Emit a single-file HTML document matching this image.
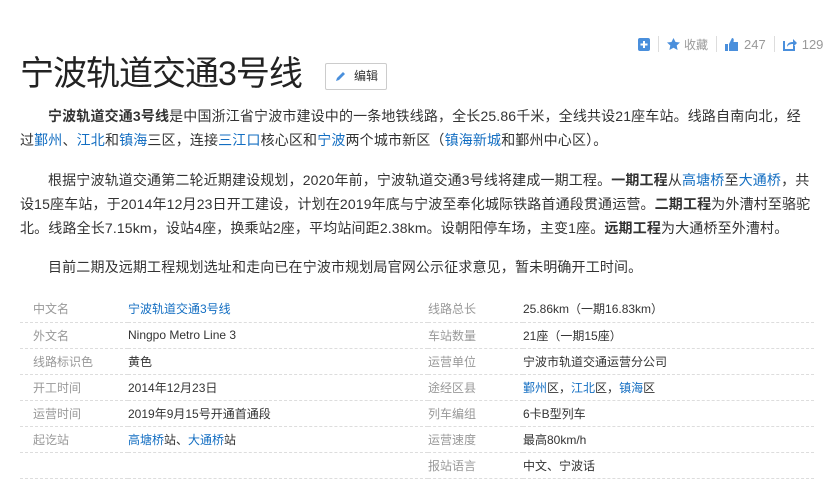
<!DOCTYPE html>
<html><head><meta charset="utf-8"><style>
*{margin:0;padding:0;box-sizing:border-box}
body{width:833px;height:487px;overflow:hidden;background:#fff;font-family:"Liberation Sans","Noto Sans CJK SC",sans-serif;color:#333;position:relative}
a{color:#136ec2;text-decoration:none}
.top{position:absolute;top:35px;left:638px;height:18px;font-size:12px;color:#999;display:flex;align-items:center;white-space:nowrap}
.sep{width:1px;height:16px;background:#ddd;margin:0 8px}
h1{position:absolute;left:20px;top:52px;font-size:34px;font-weight:normal;color:#222;line-height:44px;letter-spacing:-1px}
.edit{position:absolute;left:325px;top:63px;width:62px;height:27px;border:1px solid #ccc;border-radius:2px;font-size:12px;color:#333;line-height:25px;padding-left:28px;background:#fff}
.edit svg{position:absolute;left:9px;top:6px}
p{position:absolute;left:20px;width:813px;font-size:14px;line-height:24px;text-indent:28px;letter-spacing:0.15px;white-space:nowrap}
table{position:absolute;left:20px;top:296px;width:794px;border-collapse:collapse;font-size:12px;table-layout:fixed}
td{height:26px;border-bottom:1px dashed #ddd;vertical-align:middle;padding:0;white-space:nowrap}
td.l{color:#999;padding-left:13px}
td.r{color:#999}
</style></head><body>
<div class="top">
<svg width="12" height="13"><rect width="12" height="13" rx="2" fill="#4a8fdc"/><path d="M6 3v7M2.5 6.5h7" stroke="#fff" stroke-width="2"/></svg>
<span class="sep"></span>
<svg width="13" height="12"><path d="M6.5 0l2 4 4.5.5-3.3 3 .9 4.5-4.1-2.3-4.1 2.3.9-4.5L0 4.5 4.5 4z" fill="#4a8fdc"/></svg><span style="margin-left:4px">收藏</span>
<span class="sep"></span>
<svg width="13" height="13"><path d="M0 6h3v7H0zM4 6l3-6c2 0 2 2 1.5 4H13v9H4z" fill="#4a8fdc"/></svg><span style="margin-left:6px;font-size:13px">247</span>
<span class="sep"></span>
<svg width="14" height="13"><path d="M1 3v9h10V8" stroke="#4a8fdc" stroke-width="2" fill="none"/><path d="M4 9c0-4 3-5 6-5V1l4 4-4 4V6c-3 0-5 1-6 3z" fill="#4a8fdc"/></svg><span style="margin-left:5px;font-size:13px">129</span>
</div>
<h1>宁波轨道交通3号线</h1>
<div class="edit"><svg width="12" height="12"><path d="M1 11l1-3 6-6 2 2-6 6z" fill="#4a8fdc"/></svg>编辑</div>
<p style="top:104px"><b>宁波轨道交通3号线</b>是中国浙江省宁波市建设中的一条地铁线路，全长25.86千米，全线共设21座车站。线路自南向北，经<br>过<a>鄞州</a>、<a>江北</a>和<a>镇海</a>三区，连接<a>三江口</a>核心区和<a>宁波</a>两个城市新区（<a>镇海新城</a>和鄞州中心区）。</p>
<p style="top:168px">根据宁波轨道交通第二轮近期建设规划，2020年前，宁波轨道交通3号线将建成一期工程。<b>一期工程</b>从<a>高塘桥</a>至<a>大通桥</a>，共<br>设15座车站，于2014年12月23日开工建设，计划在2019年底与宁波至奉化城际铁路首通段贯通运营。<b>二期工程</b>为外漕村至骆驼<br>北。线路全长7.15km，设站4座，换乘站2座，平均站间距2.38km。设朝阳停车场，主变1座。<b>远期工程</b>为大通桥至外漕村。</p>
<p style="top:255px">目前二期及远期工程规划选址和走向已在宁波市规划局官网公示征求意见，暂未明确开工时间。</p>
<table>
<colgroup><col style="width:108px"><col style="width:300px"><col style="width:95px"><col></colgroup>
<tr><td class="l">中文名</td><td><a>宁波轨道交通3号线</a></td><td class="r">线路总长</td><td>25.86km（一期16.83km）</td></tr>
<tr><td class="l">外文名</td><td>Ningpo Metro Line 3</td><td class="r">车站数量</td><td>21座（一期15座）</td></tr>
<tr><td class="l">线路标识色</td><td>黄色</td><td class="r">运营单位</td><td>宁波市轨道交通运营分公司</td></tr>
<tr><td class="l">开工时间</td><td>2014年12月23日</td><td class="r">途经区县</td><td><a>鄞州</a>区，<a>江北</a>区，<a>镇海</a>区</td></tr>
<tr><td class="l">运营时间</td><td>2019年9月15号开通首通段</td><td class="r">列车编组</td><td>6卡B型列车</td></tr>
<tr><td class="l">起讫站</td><td><a>高塘桥</a>站、<a>大通桥</a>站</td><td class="r">运营速度</td><td>最高80km/h</td></tr>
<tr><td class="l"></td><td></td><td class="r">报站语言</td><td>中文、宁波话</td></tr>
</table>
</body></html>
